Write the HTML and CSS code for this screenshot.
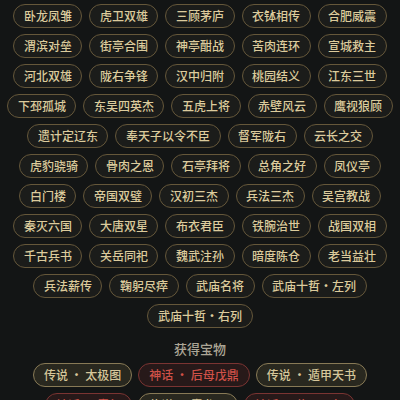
FILE: index.html
```html
<!DOCTYPE html>
<html lang="zh-CN">
<head>
<meta charset="utf-8">
<link rel="stylesheet" href="styles.css">
</head>
<body>
<div class="page">
  <div class="tags">
    <span class="tag">卧龙凤雏</span>
    <span class="tag">虎卫双雄</span>
    <span class="tag">三顾茅庐</span>
    <span class="tag">衣钵相传</span>
    <span class="tag">合肥威震</span>
    <span class="tag">渭滨对垒</span>
    <span class="tag">街亭合围</span>
    <span class="tag">神亭酣战</span>
    <span class="tag">苦肉连环</span>
    <span class="tag">宣城救主</span>
    <span class="tag">河北双雄</span>
    <span class="tag">陇右争锋</span>
    <span class="tag">汉中归附</span>
    <span class="tag">桃园结义</span>
    <span class="tag">江东三世</span>
    <span class="tag">下邳孤城</span>
    <span class="tag">东吴四英杰</span>
    <span class="tag">五虎上将</span>
    <span class="tag">赤壁风云</span>
    <span class="tag">鹰视狼顾</span>
    <span class="tag">遗计定辽东</span>
    <span class="tag">奉天子以令不臣</span>
    <span class="tag">督军陇右</span>
    <span class="tag">云长之交</span>
    <span class="tag">虎豹骁骑</span>
    <span class="tag">骨肉之恩</span>
    <span class="tag">石亭拜将</span>
    <span class="tag">总角之好</span>
    <span class="tag">凤仪亭</span>
    <span class="tag">白门楼</span>
    <span class="tag">帝国双璧</span>
    <span class="tag">汉初三杰</span>
    <span class="tag">兵法三杰</span>
    <span class="tag">吴宫教战</span>
    <span class="tag">秦灭六国</span>
    <span class="tag">大唐双星</span>
    <span class="tag">布衣君臣</span>
    <span class="tag">铁腕治世</span>
    <span class="tag">战国双相</span>
    <span class="tag">千古兵书</span>
    <span class="tag">关岳同祀</span>
    <span class="tag">魏武注孙</span>
    <span class="tag">暗度陈仓</span>
    <span class="tag">老当益壮</span>
    <span class="tag">兵法薪传</span>
    <span class="tag">鞠躬尽瘁</span>
    <span class="tag">武庙名将</span>
    <span class="tag">武庙十哲·左列</span>
    <span class="tag">武庙十哲·右列</span>
  </div>
  <h2 class="heading">获得宝物</h2>
  <div class="treasures">
    <span class="item legend">传说 · 太极图</span>
    <span class="item myth">神话 · 后母戊鼎</span>
    <span class="item legend">传说 · 遁甲天书</span>
    <span class="item myth">神话 · 青釭</span>
    <span class="item legend">传说 · 青龙刀</span>
    <span class="item myth">神话 · 传国玉玺</span>
  </div>
</div>
</body>
</html>
```

FILE: styles.css
```css
html, body {
  margin: 0;
  padding: 0;
  background: #131515;
}

body {
  font-family: "Noto Sans CJK SC", "Noto Sans", sans-serif;
  font-size: 12px;
}

.page {
  padding: 4px 5px 0;
}

.tags {
  display: flex;
  flex-wrap: wrap;
  justify-content: center;
  gap: 6px 7px;
}

.tag {
  display: inline-block;
  height: 22px;
  line-height: 22px;
  padding: 0 9.5px;
  border: 1px solid #65573a;
  border-radius: 12px;
  background: #1b1c1a;
  color: #dccb9c;
  font-weight: 500;
  white-space: nowrap;
}

.heading {
  margin: 10px 0 0;
  height: 22px;
  line-height: 22px;
  text-align: center;
  font-size: 13px;
  font-weight: 500;
  color: #aca696;
}

.treasures {
  margin-top: 3px;
  display: flex;
  flex-wrap: wrap;
  justify-content: center;
  gap: 6px;
}

.item {
  display: inline-block;
  height: 22px;
  line-height: 22px;
  padding: 0 10px;
  border-radius: 12px;
  font-weight: 500;
  white-space: nowrap;
}

.legend {
  border: 1px solid #887a56;
  background: #29281f;
  color: #d6c69a;
}

.myth {
  border: 1px solid #7a3432;
  background: #271919;
  color: #d05148;
}
```
